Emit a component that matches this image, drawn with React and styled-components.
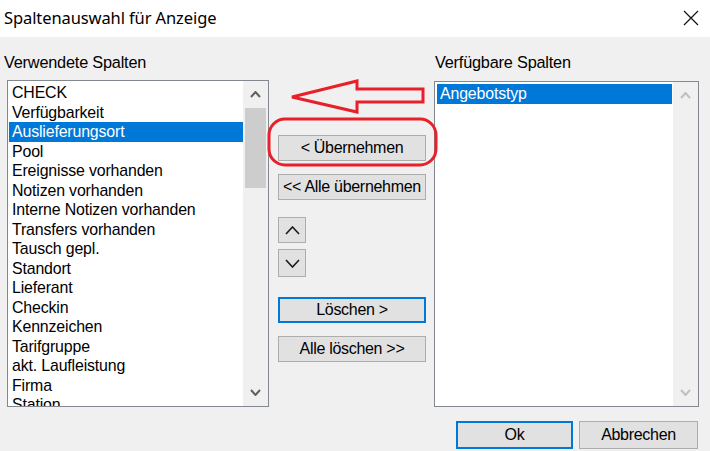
import React from "react";
import styled, { createGlobalStyle } from "styled-components";

const Global = createGlobalStyle`
  html, body { margin: 0; padding: 0; background: #f0f0f0; }
  #root { width: 710px; height: 451px; }
  * { box-sizing: border-box; }
`;

const Dialog = styled.div`
  position: relative;
  width: 710px;
  height: 451px;
  background: #f0f0f0;
  font-family: "Liberation Sans", Arial, sans-serif;
  color: #000;
  display: flex;
  flex-direction: column;
`;

const TitleBar = styled.div`
  height: 37px;
  background: #fff;
  display: flex;
  align-items: center;
  justify-content: space-between;
  padding: 0 11px 2px 4px;
  font-family: "Noto Sans", "Open Sans", sans-serif;
  font-size: 16.5px;
  letter-spacing: -0.1px;
`;

const CloseIcon = styled.svg`
  width: 16px;
  height: 16px;
  margin-top: 1px;
`;

const Body = styled.div`
  display: grid;
  grid-template-columns: 262px 148px 264px;
  column-gap: 9px;
  padding: 0 0 0 7px;
  grid-template-rows: 43px 327px;
`;

const Label = styled.div`
  font-size: 16.3px;
  letter-spacing: -0.2px;
  align-self: end;
  padding-bottom: 8px;
  margin-left: ${(p) => p.$shift || 0}px;
`;

const ListBox = styled.div`
  display: flex;
  background: #fff;
  border: 1px solid #828790;
  margin-top: ${(p) => p.$top || 0}px;
  overflow: hidden;
  ${(p) => p.$right && "margin-left: -1px;"}
`;

const Items = styled.div`
  flex: 1;
  padding: ${(p) => p.$pad || "1px 1px 0 1px"};
  overflow: hidden;
`;

const Item = styled.div`
  height: ${(p) => p.$h || 19.5}px;
  line-height: ${(p) => p.$h || 19.5}px;
  padding-left: 3px;
  font-size: 15.9px;
  letter-spacing: -0.15px;
  white-space: nowrap;
  background: ${(p) => (p.$sel ? "#0078d7" : "transparent")};
  color: ${(p) => (p.$sel ? "#fff" : "#000")};
`;

const ScrollBar = styled.div`
  width: 25px;
  background: #f0f0f0;
  display: flex;
  flex-direction: column;
  align-items: center;
`;

const ArrowCell = styled.div`
  height: 27px;
  width: 100%;
  display: flex;
  align-items: center;
  justify-content: center;
`;

const Track = styled.div`
  flex: 1;
  width: 100%;
  padding: 0 2px;
`;

const Thumb = styled.div`
  height: 80px;
  background: #cdcdcd;
`;

const Middle = styled.div`
  display: flex;
  flex-direction: column;
  padding-top: 55px;
`;

const Btn = styled.div`
  height: ${(p) => p.$h || 26}px;
  width: ${(p) => p.$w || "148px"};
  margin-top: ${(p) => p.$mt || 0}px;
  background: #e1e1e1;
  border: ${(p) => (p.$focus ? "2px solid #0078d7" : "1px solid #adadad")};
  display: flex;
  align-items: center;
  justify-content: center;
  font-size: 16px;
  letter-spacing: -0.3px;
  white-space: nowrap;
`;

const Footer = styled.div`
  display: flex;
  justify-content: flex-end;
  gap: 6px;
  padding: 14px 12px 0 0;
`;

const Overlay = styled.svg`
  position: absolute;
  left: 0;
  top: 0;
  width: 710px;
  height: 451px;
  pointer-events: none;
`;

const Chevron = ({ up, color = "#606060", w = 11, h = 7, sw = 2 }) => (
  <svg width={w} height={h} viewBox={`0 0 ${w} ${h}`}>
    <path
      d={
        up
          ? `M1 ${h - 1} L${w / 2} 1 L${w - 1} ${h - 1}`
          : `M1 1 L${w / 2} ${h - 1} L${w - 1} 1`
      }
      fill="none"
      stroke={color}
      strokeWidth={sw}
    />
  </svg>
);

const used = [
  "CHECK",
  "Verfügbarkeit",
  "Auslieferungsort",
  "Pool",
  "Ereignisse vorhanden",
  "Notizen vorhanden",
  "Interne Notizen vorhanden",
  "Transfers vorhanden",
  "Tausch gepl.",
  "Standort",
  "Lieferant",
  "Checkin",
  "Kennzeichen",
  "Tarifgruppe",
  "akt. Laufleistung",
  "Firma",
  "Station",
];

export default function App() {
  return (
    <>
      <Global />
      <Dialog>
        <TitleBar>
          <span>Spaltenauswahl für Anzeige</span>
          <CloseIcon viewBox="0 0 16 16">
            <path d="M1 1 L15 15 M15 1 L1 15" stroke="#111" strokeWidth="1.2" />
          </CloseIcon>
        </TitleBar>
        <Body>
          <Label $shift={-3}>Verwendete Spalten</Label>
          <div />
          <Label>Verfügbare Spalten</Label>

          <ListBox>
            <Items $pad="2px 0 0 1px">
              {used.map((t, i) => (
                <Item key={t} $sel={i === 2}>
                  {t}
                </Item>
              ))}
            </Items>
            <ScrollBar>
              <ArrowCell>
                <Chevron up />
              </ArrowCell>
              <Track>
                <Thumb />
              </Track>
              <ArrowCell>
                <Chevron />
              </ArrowCell>
            </ScrollBar>
          </ListBox>

          <Middle>
            <Btn>&lt; Übernehmen</Btn>
            <Btn $mt={13}>&lt;&lt; Alle übernehmen</Btn>
            <Btn $mt={17} $w="28px">
              <Chevron up color="#1a1a1a" w={15} h={9} sw={1.6} />
            </Btn>
            <Btn $mt={6} $w="28px" $h={28}>
              <Chevron color="#1a1a1a" w={15} h={9} sw={1.6} />
            </Btn>
            <Btn $mt={20} $focus>
              Löschen &gt;
            </Btn>
            <Btn $mt={13}>Alle löschen &gt;&gt;</Btn>
          </Middle>

          <ListBox $top={1} $right>
            <Items $pad="2px 1px 0 2px">
              <Item $sel $h={20}>
                Angebotstyp
              </Item>
            </Items>
            <ScrollBar>
              <ArrowCell>
                <Chevron up color="#c0c0c0" />
              </ArrowCell>
              <Track />
              <ArrowCell>
                <Chevron color="#c0c0c0" />
              </ArrowCell>
            </ScrollBar>
          </ListBox>
        </Body>
        <Footer>
          <Btn $w="117px" $h={28} $focus>
            Ok
          </Btn>
          <Btn $w="119px" $h={28}>
            Abbrechen
          </Btn>
        </Footer>
        <Overlay viewBox="0 0 710 451">
          <path
            d="M292 97 L357 81 L357 89 L423 89 L423 102 L357 102 L357 112 Z"
            fill="none"
            stroke="#e8202a"
            strokeWidth="3"
            strokeLinejoin="miter"
          />
          <rect
            x="269"
            y="119"
            width="167"
            height="46"
            rx="16"
            ry="16"
            fill="none"
            stroke="#e8202a"
            strokeWidth="3"
          />
        </Overlay>
      </Dialog>
    </>
  );
}
